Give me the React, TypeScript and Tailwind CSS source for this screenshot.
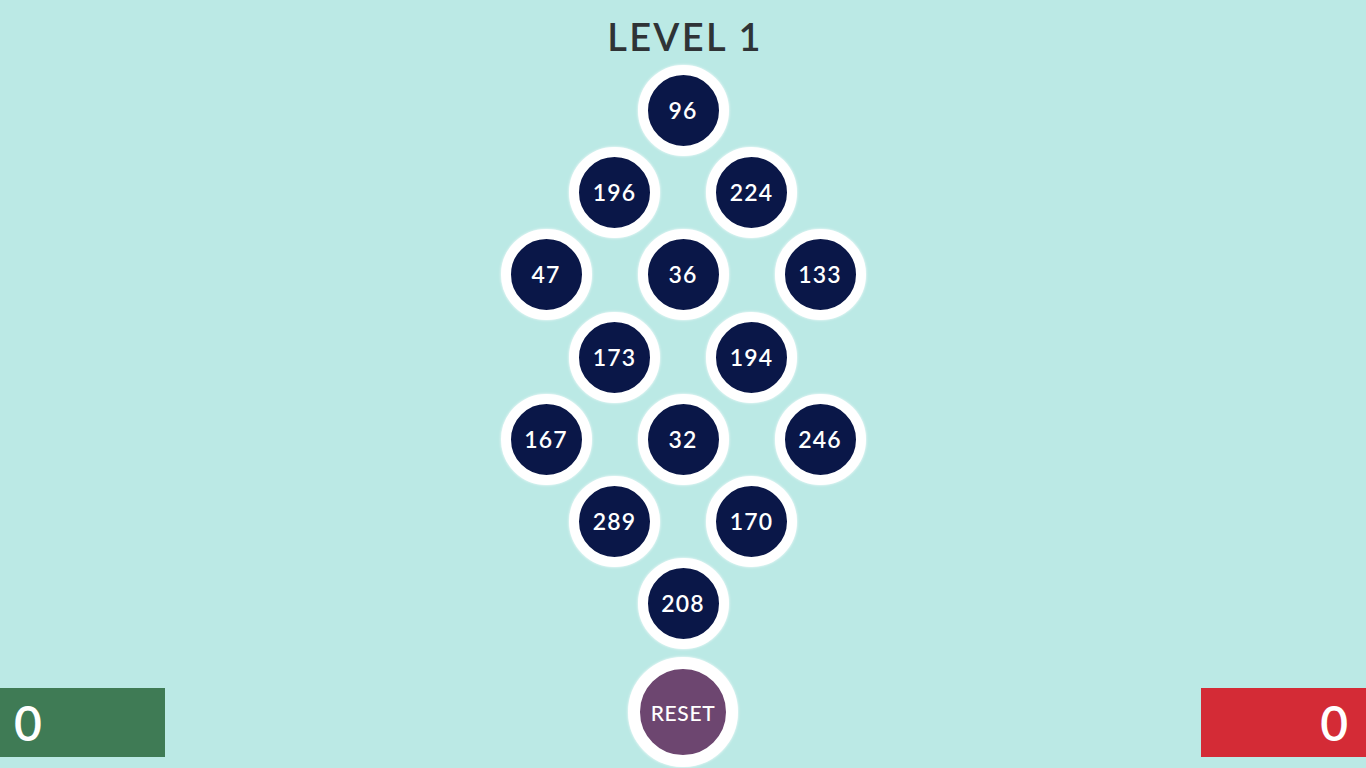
import React from 'react';

const rows: number[][] = [
  [96],
  [196, 224],
  [47, 36, 133],
  [173, 194],
  [167, 32, 246],
  [289, 170],
  [208],
];

function Cell({ value }: { value: number }) {
  return (
    <div className="shrink-0 w-[91px] h-[91px] rounded-full border-[10px] border-white bg-[#0a1748] shadow-[0_0_3px_#fff] flex items-center justify-center">
      <span className="text-[23px] font-semibold tracking-[0.05em] text-white leading-none">{value}</span>
    </div>
  );
}

export default function App() {
  return (
    <div className="h-screen w-full bg-[#bbe9e5] flex flex-col items-center overflow-hidden font-['Lato','Noto_Sans',sans-serif]">
      {/* Title */}
      <div className="h-[69px] w-full flex justify-center pt-[17px] pl-[4px]">
        <h1 className="text-[38px] leading-none font-semibold tracking-[0.06em] text-[#2f3336]">LEVEL 1</h1>
      </div>

      {/* Diamond of number cells */}
      <div className="flex flex-col">
        {rows.map((row, i) => (
          <div key={i} className="h-[82.3px] flex items-center justify-center gap-[46px]">
            {row.map((v) => (
              <Cell key={v} value={v} />
            ))}
          </div>
        ))}
      </div>

      {/* Bottom bar */}
      <div className="w-full flex-1 flex justify-between items-end">
        <div className="w-[165px] h-[69px] mb-[11px] bg-[#3f7b55] flex items-center pl-[14px]">
          <span className="text-[48px] leading-none font-semibold text-white">0</span>
        </div>
        <button className="w-[110px] h-[110px] mb-px rounded-full border-[12px] border-white bg-[#6d4670] shadow-[0_0_3px_#fff] flex items-center justify-center">
          <span className="text-[21px] font-medium tracking-[0.03em] text-white leading-none">RESET</span>
        </button>
        <div className="w-[165px] h-[69px] mb-[11px] bg-[#d42b36] flex items-center justify-end pr-[18px]">
          <span className="text-[48px] leading-none font-semibold text-white">0</span>
        </div>
      </div>
    </div>
  );
}
